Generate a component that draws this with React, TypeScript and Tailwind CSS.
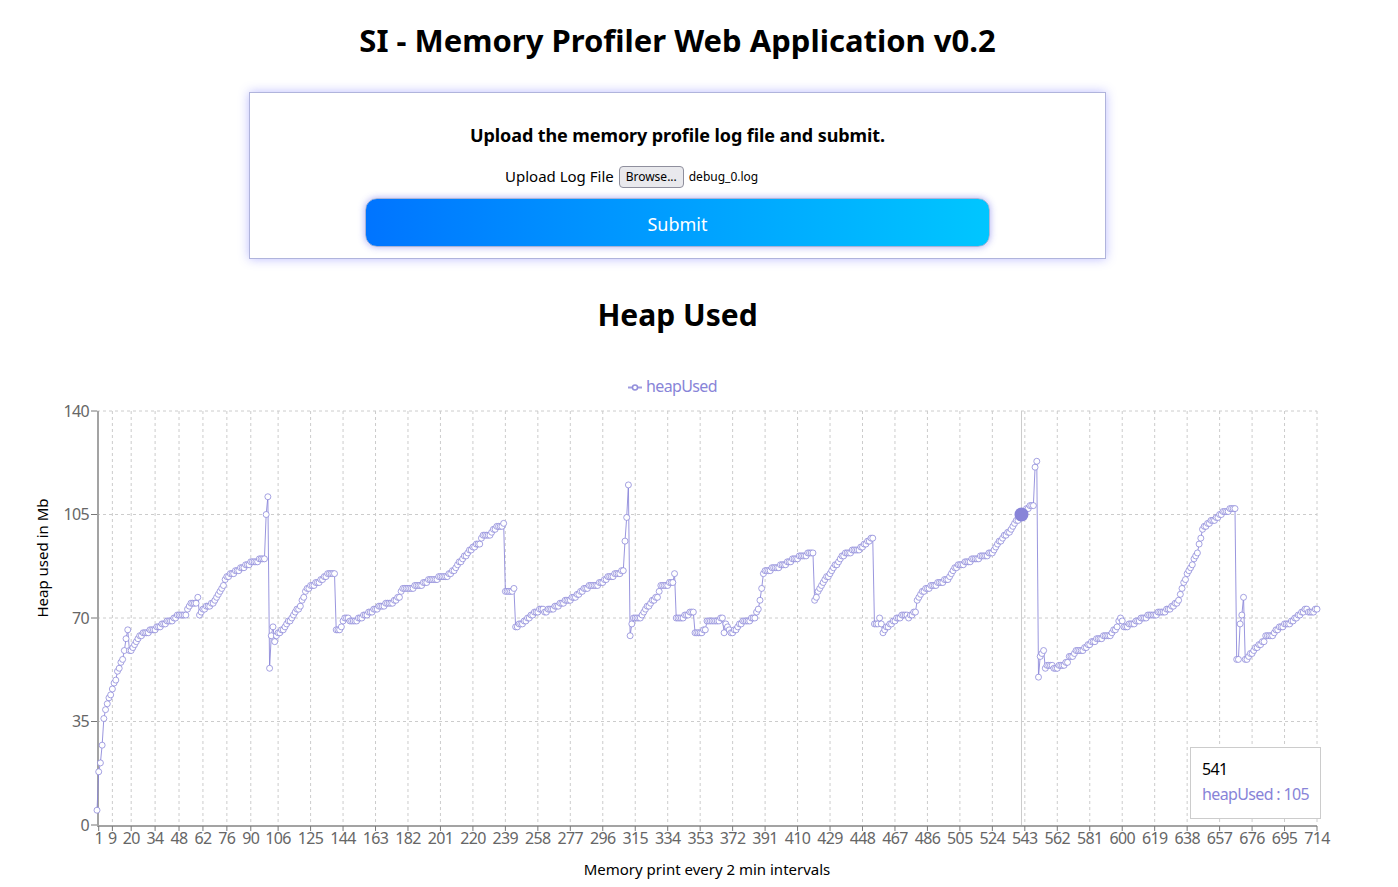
import React from "react";

// [page x, heap value] read off the chart, runs between anchors get interpolated
const anchors: [number, number][] = [
  [97, 5], [98.7, 18], [100.4, 21], [102.1, 27], [103.8, 36], [105.5, 39], [107.2, 41], [108.9, 43], [110.7, 44], [112.4, 46],
  [114.1, 48], [115.8, 49], [117.5, 52], [119.2, 53], [122.6, 56], [124.3, 59], [126, 63], [127.7, 66], [129.4, 59], [131.1, 59],
  [140, 64], [147, 65], [153, 66], [163, 68], [170, 69], [178.3, 71], [185, 71], [187.3, 73], [190.7, 75], [195.7, 75],
  [197.7, 77], [199.3, 71], [203.3, 73], [208.3, 74], [213, 75], [218.3, 78], [223.3, 81], [226.7, 84], [231.7, 85], [236.7, 86],
  [243, 87], [248, 88], [251.7, 89], [258.3, 89], [261.7, 90], [264.3, 90], [266, 105], [267.7, 111], [269.3, 53], [271, 64],
  [272.7, 67], [274.3, 62], [277, 64], [285, 67], [293.3, 71], [300, 74], [303.3, 77], [306.7, 80], [311.7, 81], [321.7, 83],
  [330, 85], [334.3, 85], [335.7, 66], [340, 66], [341.7, 67], [343.3, 69], [347.3, 70], [350, 69], [355, 69], [360, 70],
  [370, 72], [380, 74], [391.7, 75], [400, 77], [403.3, 80], [411.7, 80], [418.3, 81], [426.7, 82], [430, 83], [446.7, 84],
  [455, 87], [463.3, 90], [473.3, 94], [480, 95], [483.3, 98], [490, 98], [496.7, 101], [502.7, 101], [505, 103], [506, 79],
  [511.7, 79], [514, 80], [515.7, 67], [520, 68], [526.7, 69], [536.7, 72], [541.7, 73], [545, 72], [556.7, 74], [566.7, 76],
  [575, 77], [583.3, 80], [595, 81], [603.3, 82], [610, 84], [618.3, 85], [623, 86], [624.7, 96], [626.3, 104], [628.3, 115],
  [630, 64], [631.7, 68], [633.3, 70], [640, 70], [643.3, 72], [650, 75], [656.7, 77], [661.7, 81], [666.7, 81], [672.3, 82],
  [674.3, 85], [676, 70], [683.3, 70], [686.7, 71], [693.3, 72], [694.7, 65], [700, 65], [705, 66], [706.7, 69], [716.7, 69],
  [722.3, 70], [724, 65], [725.7, 68], [727.3, 67], [731, 65], [736, 66], [739.3, 68], [746.7, 69], [755, 70], [756.7, 72],
  [758.3, 73], [760, 76], [761.7, 80], [763.3, 85], [766.7, 86], [776.7, 87], [783.3, 88], [793.3, 90], [803.3, 91], [812.3, 92],
  [814, 76], [816.7, 77], [818.3, 79], [823.3, 82], [831.7, 86], [840, 90], [845, 92], [856.7, 93], [866.7, 95], [872.3, 97],
  [874, 68], [877.6, 68], [879.3, 70], [881, 68], [882.7, 65], [884.3, 66], [890, 68], [898.3, 70], [905, 71], [908.3, 70],
  [915, 72], [917.3, 76], [921.7, 79], [933.3, 81], [947.3, 83], [955, 87], [966.7, 89], [983.3, 91], [991.7, 92], [998.3, 95],
  [1003.3, 97], [1011.7, 100], [1021.7, 105], [1030, 108], [1033.3, 108], [1035, 121], [1036.7, 123], [1038.3, 50], [1040, 57], [1041.7, 58],
  [1043.3, 59], [1045, 53], [1048.3, 54], [1055, 53], [1061.7, 54], [1067.3, 55], [1069.3, 57], [1073.3, 57], [1076, 59], [1083.3, 59],
  [1093.3, 62], [1105, 64], [1110.7, 64], [1116.7, 67], [1120.7, 70], [1123.3, 67], [1133.3, 68], [1143.3, 70], [1153.3, 71], [1163.3, 72],
  [1173.3, 74], [1178.7, 76], [1184, 82], [1190, 87], [1196.7, 92], [1203.3, 100], [1208.3, 102], [1215, 103], [1225, 106], [1235, 107],
  [1236.3, 56], [1238.3, 56], [1240, 68], [1241.7, 71], [1243.3, 77], [1245, 56], [1246.7, 56], [1248.3, 57], [1253.3, 59], [1258.3, 61],
  [1263.3, 62], [1266, 64], [1273.3, 64], [1280, 67], [1290, 68], [1300, 71], [1306.7, 73], [1308.3, 72], [1313.3, 72], [1317, 73],
];

const STEP = 1.7087;
const xOf = (v: number) => 97 + v * STEP;
const yOf = (h: number) => 825 - (h * 414) / 140;

const buildData = () => {
  const pts = anchors.map(([x, h]) => [Math.round((x - 97) / STEP), h]);
  const out: number[] = [];
  for (let i = 0; i < pts.length - 1; i++) {
    const [a, ha] = pts[i];
    const [b, hb] = pts[i + 1];
    for (let v = a; v <= b; v++) {
      out[v] = b === a ? hb : Math.round(ha + ((hb - ha) * (v - a)) / (b - a));
    }
  }
  return out;
};

const data = buildData();
const linePoints = data.map((h, v) => `${xOf(v)},${yOf(h)}`).join(" ");

const xTicks = [
  1, 9, 20, 34, 48, 62, 76, 90, 106, 125, 144, 163, 182, 201, 220, 239, 258, 277, 296, 315, 334, 353, 372, 391, 410, 429,
  448, 467, 486, 505, 524, 543, 562, 581, 600, 619, 638, 657, 676, 695, 714,
];
const yTicks = [0, 35, 70, 105, 140];

const HeapChart: React.FC = () => {
  return (
    <div className="relative h-[517px] w-[1356px]">
      <svg width={1356} height={517} viewBox="0 370 1356 517" className="block text-[16px] tracking-[-0.04em]">
        {/* legend */}
        <line x1={628} y1={387.5} x2={642} y2={387.5} stroke="#8884d8" strokeOpacity={0.8} strokeWidth={2} />
        <circle cx={635} cy={387.5} r={2.5} fill="#fff" stroke="#8884d8" strokeOpacity={0.9} strokeWidth={1.5} />
        <text x={646} y={392} fill="#8884d8">heapUsed</text>

        {/* grid */}
        {yTicks.slice(1).map((t) => (
          <line key={t} x1={97} x2={1317} y1={yOf(t)} y2={yOf(t)} stroke="#ccc" strokeDasharray="3 3" />
        ))}
        {xTicks.slice(1).map((t) => (
          <line key={t} x1={xOf(t)} x2={xOf(t)} y1={411} y2={825} stroke="#ccc" strokeDasharray="3 3" />
        ))}

        {/* axes */}
        <line x1={98} x2={98} y1={411} y2={826} stroke="#a3a3a3" strokeWidth={2} />
        <line x1={97} x2={1317} y1={826} y2={826} stroke="#a3a3a3" strokeWidth={2} />
        {yTicks.map((t) => (
          <g key={t}>
            <line x1={91} x2={97} y1={yOf(t)} y2={yOf(t)} stroke="#777" />
            <text x={89} y={yOf(t) + 5.5} textAnchor="end" fill="#666">{t}</text>
          </g>
        ))}
        {xTicks.map((t) => (
          <g key={t}>
            <line x1={xOf(t)} x2={xOf(t)} y1={826} y2={831} stroke="#777" />
            <text x={xOf(t)} y={844} textAnchor="middle" fill="#666">{t}</text>
          </g>
        ))}
        <text x={707} y={875} textAnchor="middle" fill="#000" className="text-[15px] tracking-normal">Memory print every 2 min intervals</text>
        <text transform="translate(48 558) rotate(-90)" textAnchor="middle" fill="#000" className="text-[15px] tracking-normal">Heap used in Mb</text>

        {/* hover cursor */}
        <line x1={1021.5} x2={1021.5} y1={411} y2={825} stroke="#ccc" />

        {/* series */}
        <polyline points={linePoints} fill="none" stroke="#8884d8" strokeOpacity={0.85} />
        {data.map((h, v) => (
          <circle key={v} cx={xOf(v)} cy={yOf(h)} r={3} fill="#fff" stroke="#8884d8" strokeOpacity={0.75} />
        ))}
        <circle cx={1021.5} cy={514.5} r={7} fill="#8884d8" />
      </svg>

      {/* tooltip */}
      <div className="absolute left-[1190px] top-[377px] h-[72px] w-[131px] border border-[#ccc] bg-white pl-[11px] pt-[9px] text-[16px] leading-[24px] tracking-[-0.04em]">
        <div className="text-black">541</div>
        <div className="mt-px text-[#8884d8]">heapUsed : 105</div>
      </div>
    </div>
  );
};

const App: React.FC = () => {
  return (
    <div className="h-[887px] w-[1398px] overflow-hidden bg-white font-['Noto_Sans',sans-serif] text-black">
      <div className="flex w-[1355px] flex-col items-center">
        <h1 className="mt-[18px] text-[31px] font-bold leading-[44px]">SI - Memory Profiler Web Application v0.2</h1>
        <div className="mt-[30px] flex h-[167px] w-[857px] flex-col items-center border border-[#b0b4dc] bg-white pt-[30px] shadow-[0_0_10px_rgba(90,90,255,0.4)]">
          <h3 className="text-[18px] font-bold leading-[25px] tracking-[-0.005em]">Upload the memory profile log file and submit.</h3>
          <div className="mt-[17px] flex h-[24px] w-[625px] items-center pl-[140px]">
            <span className="-mt-px text-[15px]">Upload Log File</span>
            <button className="ml-[5px] h-[22px] w-[65px] rounded-[4px] border border-[#8f8f9d] bg-[#e9e9ed] text-[12px]">Browse...</button>
            <span className="ml-[5px] text-[12px]">debug_0.log</span>
          </div>
          <button className="mt-[9px] h-[49px] w-[625px] rounded-[12px] border border-[#a9b4d8] bg-gradient-to-r from-[#0074ff] to-[#00c6ff] pt-[3px] text-[18px] text-white shadow-[0_0_7px_rgba(70,70,230,0.45)]">
            Submit
          </button>
        </div>
        <h2 className="mt-[34px] text-[30px] font-bold leading-[44px]">Heap Used</h2>
        <div className="mt-[33px] self-start">
          <HeapChart />
        </div>
      </div>
    </div>
  );
};

export default App;
